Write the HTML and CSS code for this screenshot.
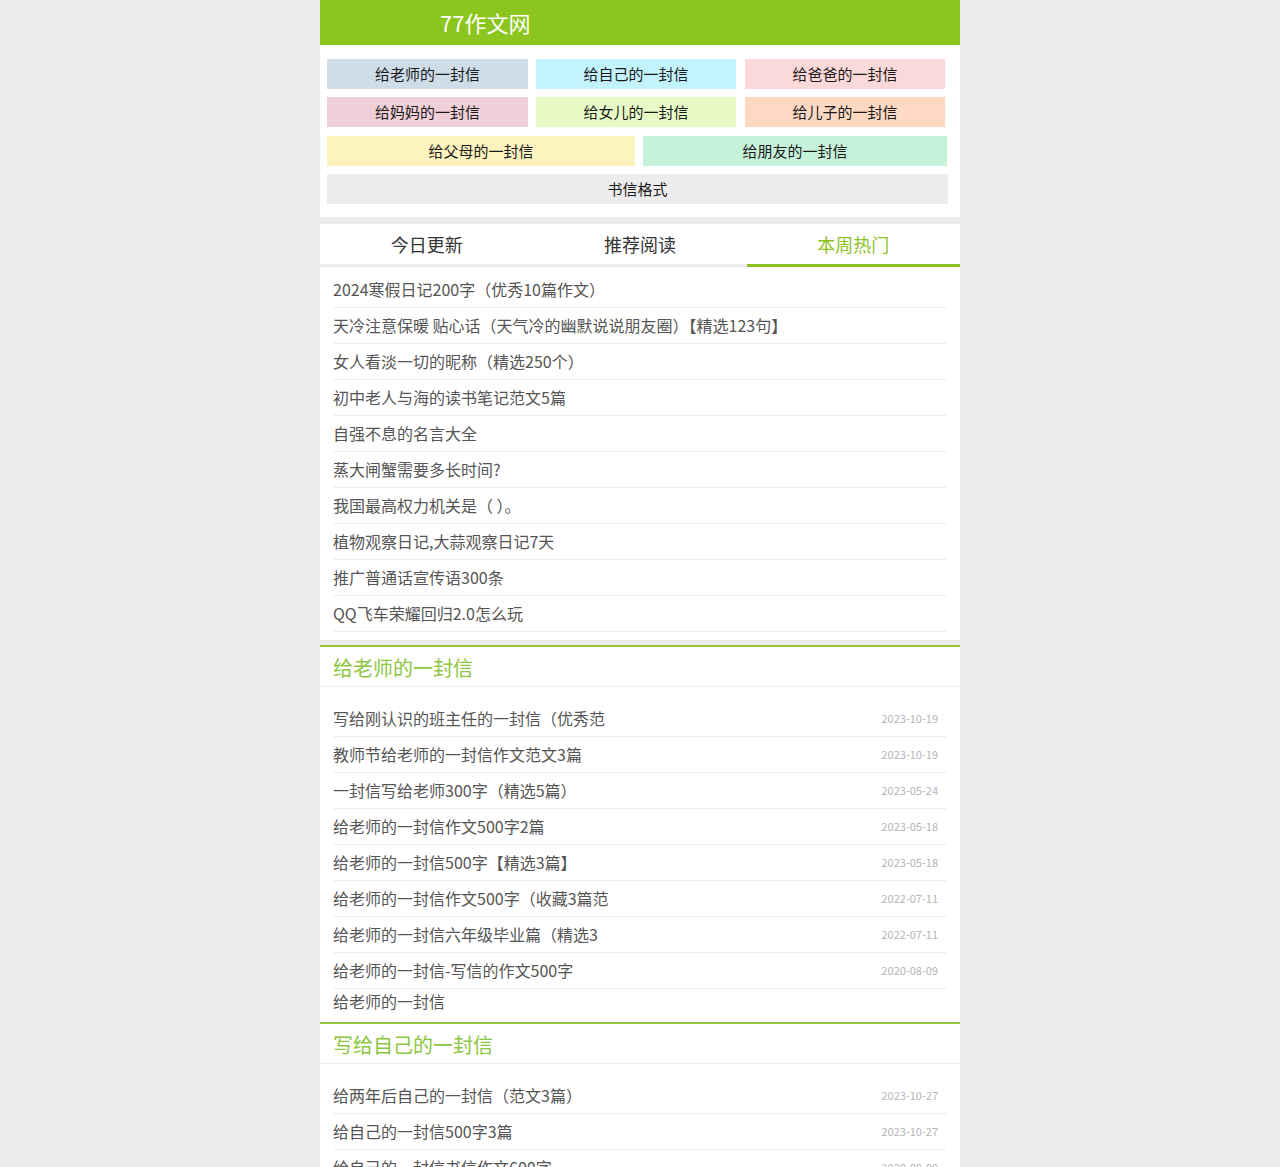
FILE: index.html
```html
<html>
  <head>
    <meta charset="utf-8" />
    <title>77作文网</title>
    <meta name="viewport" content="width=device-width, initial-scale=1.0" />
    <link rel="stylesheet" href="styles.css">
  </head>
  <body>
    <div class="page">
      <header class="top">
        <a class="logo" href="#">77作文网</a>
      </header>

      <nav class="nav">
        <div class="nav-row three">
          <a class="btn c1" href="#">给老师的一封信</a>
          <a class="btn c2" href="#">给自己的一封信</a>
          <a class="btn c3" href="#">给爸爸的一封信</a>
        </div>
        <div class="nav-row three">
          <a class="btn c4" href="#">给妈妈的一封信</a>
          <a class="btn c5" href="#">给女儿的一封信</a>
          <a class="btn c6" href="#">给儿子的一封信</a>
        </div>
        <div class="nav-row two">
          <a class="btn c7" href="#">给父母的一封信</a>
          <a class="btn c8" href="#">给朋友的一封信</a>
        </div>
        <div class="nav-row one">
          <a class="btn c9" href="#">书信格式</a>
        </div>
      </nav>

      <section class="tabs-box">
        <div class="tabs">
          <div class="tab">今日更新</div>
          <div class="tab">推荐阅读</div>
          <div class="tab active">本周热门</div>
        </div>
        <ul class="list">
          <li><a href="#">2024寒假日记200字（优秀10篇作文）</a></li>
          <li><a href="#">天冷注意保暖 贴心话（天气冷的幽默说说朋友圈）【精选123句】</a></li>
          <li><a href="#">女人看淡一切的昵称（精选250个）</a></li>
          <li><a href="#">初中老人与海的读书笔记范文5篇</a></li>
          <li><a href="#">自强不息的名言大全</a></li>
          <li><a href="#">蒸大闸蟹需要多长时间?</a></li>
          <li><a href="#">我国最高权力机关是（ ）。</a></li>
          <li><a href="#">植物观察日记,大蒜观察日记7天</a></li>
          <li><a href="#">推广普通话宣传语300条</a></li>
          <li><a href="#">QQ飞车荣耀回归2.0怎么玩</a></li>
        </ul>
      </section>

      <section class="cat">
        <h2 class="cat-title">给老师的一封信</h2>
        <ul class="list dated">
          <li><a href="#">写给刚认识的班主任的一封信（优秀范</a><span class="date">2023-10-19</span></li>
          <li><a href="#">教师节给老师的一封信作文范文3篇</a><span class="date">2023-10-19</span></li>
          <li><a href="#">一封信写给老师300字（精选5篇）</a><span class="date">2023-05-24</span></li>
          <li><a href="#">给老师的一封信作文500字2篇</a><span class="date">2023-05-18</span></li>
          <li><a href="#">给老师的一封信500字【精选3篇】</a><span class="date">2023-05-18</span></li>
          <li><a href="#">给老师的一封信作文500字（收藏3篇范</a><span class="date">2022-07-11</span></li>
          <li><a href="#">给老师的一封信六年级毕业篇（精选3</a><span class="date">2022-07-11</span></li>
          <li><a href="#">给老师的一封信-写信的作文500字</a><span class="date">2020-08-09</span></li>
        </ul>
        <a class="more" href="#">给老师的一封信</a>
      </section>

      <section class="cat">
        <h2 class="cat-title">写给自己的一封信</h2>
        <ul class="list dated">
          <li><a href="#">给两年后自己的一封信（范文3篇）</a><span class="date">2023-10-27</span></li>
          <li><a href="#">给自己的一封信500字3篇</a><span class="date">2023-10-27</span></li>
          <li><a href="#">给自己的一封信书信作文600字</a><span class="date">2020-08-09</span></li>
          <li><a href="#">写给自己的一封信作文</a><span class="date">2020-08-09</span></li>
        </ul>
      </section>
    </div>
  </body>
</html>
```

FILE: styles.css
```css
html,
body {
  margin: 0;
  padding: 0;
}

body {
  background: #ececec;
  font: 16px "Noto Sans CJK SC", "Noto Sans", sans-serif;
  color: #555;
}

a {
  text-decoration: none;
  color: inherit;
}

ul {
  list-style: none;
  margin: 0;
  padding: 0;
}

.page {
  width: 640px;
  margin: 0 auto;
  background: #fff;
}

/* header */
.top {
  height: 45px;
  background: #8cc51d;
  padding-left: 120px;
}
.logo {
  display: block;
  line-height: 45px;
  font-size: 22px;
  color: #fff;
}

/* colour nav */
.nav {
  padding: 14px 12px 13px 7px;
  border-bottom: 7px solid #ececec;
}
.nav-row {
  display: flex;
  gap: 8px;
  margin-bottom: 8px;
}
.nav-row:last-child {
  margin-bottom: 0;
}
.nav-row.two {
  margin-bottom: 8px;
  margin-top: 9px;
  width: 620px;
}
.nav-row.one {
  width: 621px;
}
.btn {
  display: block;
  height: 30px;
  line-height: 30px;
  text-align: center;
  font-size: 15px;
  color: #1a1a1a;
}
.three .btn {
  width: 200px;
}
.three .btn:first-child {
  width: 201px;
}
.three .btn:last-child {
  margin-left: 1px;
}
.two .btn:first-child {
  width: 308px;
}
.two .btn:last-child {
  width: 304px;
}
.one .btn {
  width: 100%;
}
.c1 { background: #cfdde9; }
.c2 { background: #c3f3fc; }
.c3 { background: #fbd9d9; }
.c4 { background: #f1cfd8; }
.c5 { background: #e6fbc6; }
.c6 { background: #fdd8c2; }
.c7 { background: #fdf3bf; }
.c8 { background: #c6f2d9; }
.c9 { background: #ececec; }

/* tabs */
.tabs-box {
  border-bottom: 5px solid #ececec;
}
.tabs {
  display: flex;
}
.tab {
  flex: 1;
  height: 40px;
  line-height: 40px;
  text-align: center;
  font-size: 18px;
  color: #333;
  border-bottom: 3px solid #ececec;
}
.tab.active {
  color: #8cc21f;
  border-bottom-color: #8cc21f;
}

.list {
  padding: 5px 13px 8px;
}
.list li {
  display: flex;
  justify-content: space-between;
  align-items: center;
  height: 35px;
  line-height: 35px;
  border-bottom: 1px solid #eee;
  white-space: nowrap;
  overflow: hidden;
}
.list li a {
  color: #555;
}

/* category blocks */
.cat {
  border-top: 2px solid #94c540;
}
.cat-title {
  margin: 0;
  height: 39px;
  line-height: 41px;
  padding-left: 13px;
  font-size: 20px;
  font-weight: normal;
  color: #8cc63f;
  border-bottom: 1px solid #eee;
}
.list.dated {
  padding: 14px 13px 0;
}
.date {
  font-size: 11px;
  color: #b5b5b5;
  padding-right: 9px;
}
.more {
  display: block;
  padding: 0 0 9px 13px;
  line-height: 24px;
  color: #555;
}
```
